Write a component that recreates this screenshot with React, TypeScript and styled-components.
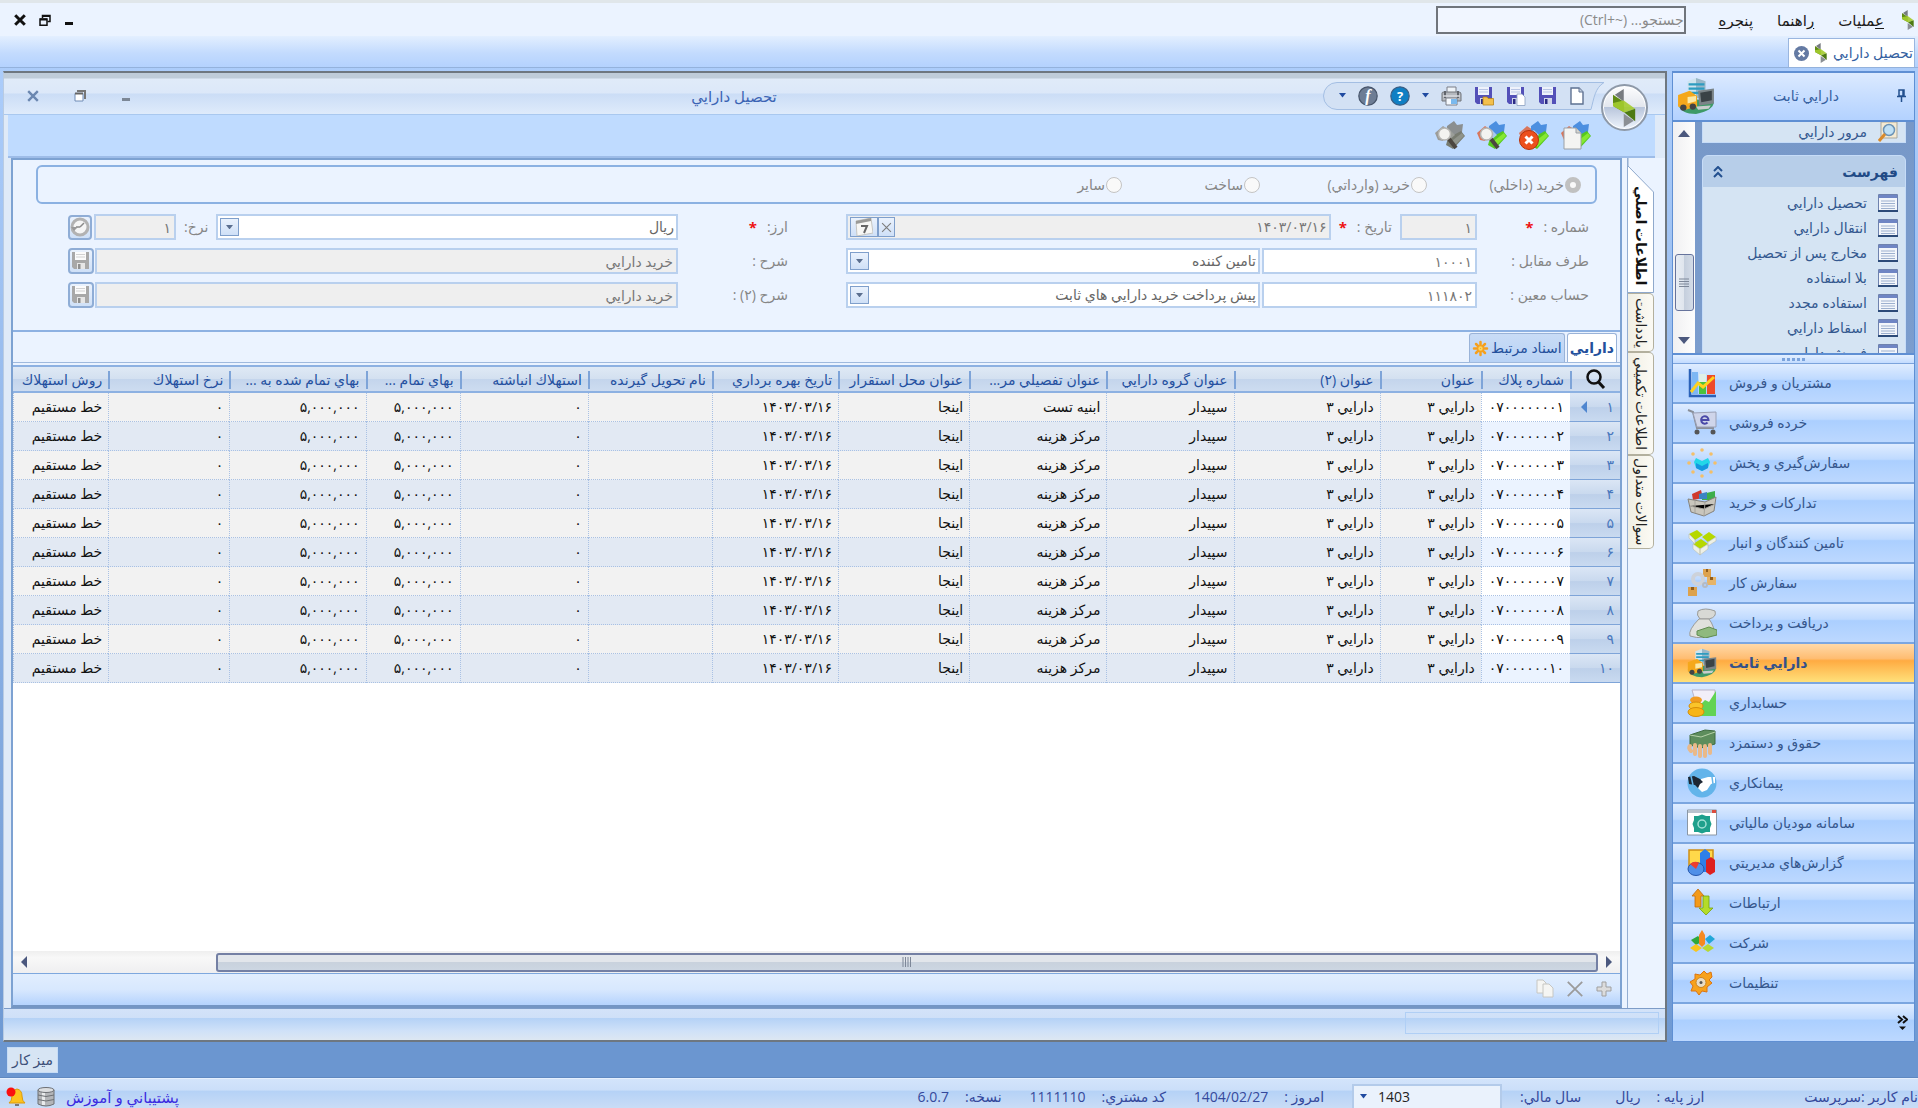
import React from "react";
import styled, { createGlobalStyle, css } from "styled-components";

const Global = createGlobalStyle`
  *, *::before, *::after { box-sizing: border-box; }
  html, body { margin: 0; padding: 0; }
  body {
    font-family: "Open Sans", "DejaVu Sans", sans-serif;
    font-size: 14px;
    line-height: 20px;
    color: #2b4f8c;
    overflow: hidden;
  }
  button, input, select { font: inherit; color: inherit; margin: 0; padding: 0; border: 0; background: none; border-radius: 0; outline: 0; }
  a { color: inherit; text-decoration: none; }
  svg { display: block; flex: none; }
`;

/* ---------- page frame ---------- */

const Page = styled.div`
  display: flex;
  flex-direction: column;
  height: 100vh;
  border-top: 3px solid #e0e6ea;
  background: linear-gradient(#b0d0fd, #6b96d0);
`;

const MenuBar = styled.header`
  display: flex;
  align-items: center;
  height: 33px;
  flex: none;
  padding: 0 4px 0 14px;
  background: #ebf3ff;
  color: #1c1c1c;
`;

const WindowButtons = styled.div<{ $gap: number }>`
  display: flex;
  align-items: center;
  gap: ${(p) => p.$gap}px;
`;

const IconButton = styled.button`
  display: flex;
  align-items: center;
  justify-content: center;
  flex: none;
`;

const SearchBox = styled.input`
  width: 250px;
  height: 28px;
  margin-left: auto;
  padding: 0;
  border: 2px solid #70757c;
  background: #f1f6ff;
  font-size: 14px;
  direction: rtl;
  &::placeholder { color: #8a8a8a; opacity: 1; }
`;

const Menus = styled.nav`
  display: flex;
  align-items: center;
  gap: 24px;
  margin-left: 33px;
`;

const MenuItem = styled.button`
  direction: rtl;
  font-size: 15px;
`;

const Mnemonic = styled.u`
  text-underline-offset: 2px;
`;

const MenuLogo = styled.span`
  margin-left: 18px;
`;

const TabStrip = styled.div`
  display: flex;
  justify-content: flex-end;
  align-items: flex-end;
  height: 32px;
  flex: none;
  padding-right: 3px;
  background: linear-gradient(#e3efff, #c3dbfe 55%, #b4d2fe);
  border-bottom: 1px solid #94b2dc;
`;

const DocTab = styled.div`
  display: flex;
  align-items: center;
  gap: 6px;
  height: 29px;
  padding: 0 1px 0 5px;
  direction: ltr;
  background: #fff;
  border: 1px solid #9ab6df;
  border-bottom: 0;
  color: #33609f;
`;

const Workspace = styled.main`
  display: flex;
  flex: 1;
  min-height: 0;
  gap: 5px;
  padding: 3px 3px 0 3px;
`;

/* ---------- document window ---------- */

const DocWindow = styled.section`
  position: relative;
  display: flex;
  flex-direction: column;
  flex: 1;
  min-width: 0;
  border: 2px solid #6e7780;
  border-left: 1px solid #b9cbe2;
  background: #dfeaf8;
`;

const TitleBar = styled.div`
  display: flex;
  align-items: center;
  height: 42px;
  flex: none;
  padding: 4px 61px 0 23px;
  background: linear-gradient(#bfccd9 5px, #e0ebf9 6px, #dce8f9 20px, #cbddf6 21px, #dfebfb);
  border-bottom: 1px solid #a9c8ef;
`;

const Title = styled.h1`
  flex: 1;
  margin: 0;
  padding-left: 14px;
  text-align: center;
  direction: rtl;
  font-size: 15px;
  font-weight: 400;
  color: #3c64b4;
`;

const QuickAccess = styled.div`
  position: relative;
  display: flex;
  align-items: center;
  width: 281px;
  height: 28px;
  padding: 0 20px 0 16px;
  justify-content: space-between;
`;

const PillShape = styled.svg`
  position: absolute;
  inset: 0;
`;

const QuickButton = styled(IconButton)`
  position: relative;
`;

const Orb = styled.button`
  position: absolute;
  z-index: 2;
  top: 11px;
  right: 17px;
  display: flex;
  align-items: center;
  justify-content: center;
  width: 47px;
  height: 47px;
  border-radius: 50%;
  border: 2px solid #8e99a8;
  background: linear-gradient(#fdfdfe, #e3e7ee 48%, #b9c6dc 50%, #eef4fc);
  box-shadow: inset 0 0 0 1px #fff;
`;

const Ribbon = styled.div`
  display: flex;
  justify-content: flex-end;
  align-items: center;
  gap: 12px;
  height: 43px;
  flex: none;
  margin: 0 10px 0 4px;
  padding: 0 64px 0 0;
  background: #bfdbff;
  border-bottom: 2px solid #9dbce8;
`;

const Body = styled.div`
  display: flex;
  flex: 1;
  min-height: 0;
  margin-left: 7px;
  background: #ebf3ff;
`;

const Content = styled.div`
  display: flex;
  flex-direction: column;
  flex: 1;
  min-width: 0;
  border: 2px solid #7da2d2;
  border-bottom: 3px solid #7496c4;
  margin-right: 5px;
`;

const FormPanel = styled.form`
  flex: none;
  height: 172px;
  padding: 5px 23px 0 23px;
  border-bottom: 2px solid #8db1e2;
  direction: rtl;
  color: #868686;
`;

const RadioGroup = styled.fieldset`
  display: flex;
  align-items: center;
  height: 39px;
  margin: 0;
  padding: 0 14px;
  border: 2px solid #8bb1e2;
  border-radius: 6px;
`;

const RadioLabel = styled.label<{ $width: number }>`
  display: flex;
  align-items: center;
  gap: 1px;
  width: ${(p) => p.$width}px;
`;

const Radio = styled.input`
  appearance: none;
  width: 16px;
  height: 16px;
  border: 1px solid #c4c4c4;
  border-radius: 50%;
  background: #f9f9f9;
  &:checked { border: 5px solid #c1c1c1; }
`;

const FormGrid = styled.div`
  display: grid;
  grid-template-columns: 112px minmax(0, 630fr) 168px minmax(0, 609fr);
  row-gap: 8px;
  padding: 10px 8px 0 32px;
  align-items: center;
`;

const Label = styled.label`
  display: flex;
  gap: 10px;
  white-space: nowrap;
`;

const LeadLabel = styled(Label)`
  padding-right: 58px;
`;

const Star = styled.span`
  color: #ee1111;
  font-weight: 700;
  font-size: 15px;
`;

const FieldRow = styled.div<{ $gap: number }>`
  display: flex;
  align-items: center;
  gap: ${(p) => p.$gap}px;
  min-width: 0;
`;

const fieldBox = css`
  height: 26px;
  border: 2px solid #b9d0ee;
  background: #fff;
`;

const TextField = styled.input<{ $width?: number; $grey?: boolean }>`
  ${fieldBox}
  min-width: 0;
  ${(p) => (p.$width ? `width: ${p.$width}px; flex: none;` : "flex: 1;")}
  padding: 0 3px;
  direction: rtl;
  color: #777;
  ${(p) => p.$grey && "background: #efefef;"}
`;

const Combo = styled.div<{ $grey?: boolean }>`
  ${fieldBox}
  display: flex;
  align-items: center;
  flex: 1;
  min-width: 0;
  padding-left: 2px;
  ${(p) => p.$grey && "background: #efefef;"}
`;

const ComboSelect = styled.select`
  appearance: none;
  flex: 1;
  min-width: 0;
  padding: 0 2px;
  direction: rtl;
  color: #666;
`;

const ComboInput = styled.input`
  flex: 1;
  min-width: 0;
  padding: 0 2px;
  direction: rtl;
  color: #777;
`;

const SmallButton = styled(IconButton)<{ $width: number; $height: number }>`
  width: ${(p) => p.$width}px;
  height: ${(p) => p.$height}px;
  border: 1px solid #7f9fcb;
  background: linear-gradient(#eaf2fd, #cfe0f7);
`;

const SideButton = styled(SmallButton)`
  border-width: 2px;
  border-color: #8fadd6;
  border-radius: 4px;
`;

/* ---------- grid ---------- */

const GridTabs = styled.div`
  display: flex;
  align-items: flex-end;
  gap: 2px;
  height: 31px;
  flex: none;
  padding-right: 3px;
  direction: rtl;
  border-bottom: 1px solid #9fb9dd;
`;

const GridTab = styled.button<{ $active?: boolean }>`
  display: flex;
  align-items: center;
  gap: 2px;
  height: 29px;
  padding: 0 2px;
  border: 1px solid #9ab3d8;
  border-bottom: 0;
  border-radius: 3px 3px 0 0;
  color: #23509c;
  background: ${(p) => (p.$active ? "#fff" : "linear-gradient(#c9dcf6, #b8d2f5)")};
  font-weight: ${(p) => (p.$active ? 700 : 400)};
`;

const GridArea = styled.div`
  display: flex;
  flex-direction: column;
  flex: 1;
  min-height: 0;
  margin-top: 2px;
  border-top: 2px solid #8db1e2;
  background: #fff;
`;

const Table = styled.table`
  width: 100%;
  table-layout: fixed;
  border-collapse: separate;
  border-spacing: 0;
  direction: rtl;
  color: #111;
`;

const Th = styled.th<{ $center?: boolean }>`
  position: relative;
  height: 26px;
  padding: 2px 6px 0;
  text-align: right;
  font-weight: 400;
  white-space: nowrap;
  overflow: hidden;
  color: #2450a0;
  background: linear-gradient(#dfe9f5, #d3e0f0 50%, #c4d5ec 52%, #cddcf0);
  border-bottom: 2px solid #8db1e2;
  ${(p) => p.$center && "padding: 0 13px;"}
  &:not(:last-child)::after {
    content: "";
    position: absolute;
    left: 0;
    top: 4px;
    bottom: 2px;
    width: 2px;
    background: #7ea4d8;
  }
`;

const Row = styled.tr`
  background: #f2f2f2;
  &:nth-child(even) { background: #e2e9f3; }
`;

const Td = styled.td<{ $first?: boolean }>`
  height: 29px;
  padding: 0 6px;
  text-align: right;
  white-space: nowrap;
  border-left: 1px dotted #a9c1e4;
  border-bottom: 1px dotted #a9c1e4;
  ${(p) => p.$first && css`background: #fff; ${Row}:nth-child(even) & { background: #ebf3ff; }`}
`;

const RowHead = styled.th`
  padding: 0 6px;
  text-align: right;
  font-weight: 400;
  color: #4a78bd;
  background: linear-gradient(#dbe6f5, #c9d9ee 50%, #bdd0ea 52%, #c9daf0);
  border-bottom: 1px solid #7ea4d8;
`;

const RowHeadInner = styled.div`
  display: flex;
  justify-content: space-between;
  align-items: center;
`;

const HScroll = styled.div`
  display: flex;
  align-items: center;
  height: 22px;
  flex: none;
  margin-top: auto;
  padding: 0 7px 0 7px;
  background: linear-gradient(#efefef, #f8f8f8 30%, #efeff0);
`;

const HTrack = styled.div`
  flex: 1;
  display: flex;
  justify-content: flex-end;
  margin: 0 7px 0 0;
`;

const HThumb = styled.div`
  display: flex;
  justify-content: center;
  align-items: center;
  width: 88%;
  height: 19px;
  border: 2px solid #7480a4;
  border-radius: 3px;
  background: linear-gradient(#e2e6eb, #e2e6eb 45%, #c9d2dd 50%, #ccd6e2);
`;

const GridFooter = styled.div`
  display: flex;
  justify-content: flex-end;
  align-items: center;
  gap: 12px;
  height: 32px;
  flex: none;
  padding: 0 8px 2px;
  background: linear-gradient(#e1eefe, #d8e8fe 50%, #b5d3fd);
  border-top: 1px solid #7ea8de;
`;

const SideTabs = styled.div`
  display: flex;
  flex-direction: column;
  width: 38px;
  flex: none;
  border-left: 1px solid #94aed2;
`;

const SideTab = styled.button<{ $height: number }>`
  display: flex;
  align-items: center;
  justify-content: center;
  width: 26px;
  height: ${(p) => p.$height}px;
  overflow: hidden;
  writing-mode: vertical-rl;
  white-space: nowrap;
  color: #222;
  border: 1px solid #b3b09e;
  border-left: 0;
  border-radius: 0 5px 5px 0;
  background: linear-gradient(90deg, #f1efe4, #fbfaf4);
`;

const ActiveSideTab = styled.button`
  position: relative;
  display: flex;
  align-items: center;
  justify-content: flex-end;
  width: 26px;
  height: 135px;
  padding-bottom: 8px;
  writing-mode: vertical-rl;
  white-space: nowrap;
  font-weight: 700;
  color: #111;
`;

const ChamferShape = styled.svg`
  position: absolute;
  inset: 0;
`;

const TabCaption = styled.span`
  position: relative;
`;

const FooterBar = styled.div`
  display: flex;
  justify-content: flex-end;
  align-items: flex-start;
  height: 32px;
  flex: none;
  padding: 3px 6px;
  background: linear-gradient(#d3e3f9, #cfe0f8 28%, #b5d2f6 30%, #cfe1f8 70%, #dde7f2);
  border-top: 1px solid #7d9cc8;
`;

const FooterSlot = styled.div`
  width: 254px;
  height: 22px;
  border: 1px solid #b0cff5;
`;

/* ---------- right sidebar ---------- */

const Sidebar = styled.aside`
  display: flex;
  flex-direction: column;
  width: 243px;
  flex: none;
  border: 1px solid #5f8fd3;
  border-width: 2px 1px 1px 1px;
`;

const SideHeader = styled.div`
  display: flex;
  align-items: center;
  height: 49px;
  flex: none;
  padding: 0 8px 2px 4px;
  background: linear-gradient(#dceaff, #c9dfff 45%, #b3d2ff);
  border-bottom: 2px solid #5f8fd3;
`;

const SideTitle = styled.h2`
  flex: 1;
  margin: 0;
  text-align: center;
  font-size: 14px;
  font-weight: 400;
  direction: rtl;
  color: #35609f;
`;

const SideScroll = styled.div`
  display: flex;
  flex: 1;
  min-height: 0;
  overflow: hidden;
`;

const VScroll = styled.div`
  display: flex;
  flex-direction: column;
  align-items: center;
  justify-content: space-between;
  width: 22px;
  flex: none;
  padding: 8px 0 9px;
  background: linear-gradient(90deg, #f0f0f2, #fdfdfd);
`;

const VTrack = styled.div`
  flex: 1;
  display: flex;
  align-items: flex-end;
  padding-bottom: 26px;
`;

const VThumb = styled.div`
  display: flex;
  align-items: center;
  justify-content: center;
  width: 19px;
  height: 57px;
  border: 1px solid #66739c;
  border-radius: 3px;
  background: linear-gradient(90deg, #e8edf4, #dfe5ed 48%, #c5cfdd 50%, #d4dce8);
`;

const Groups = styled.div`
  display: flex;
  flex-direction: column;
  flex: 1;
  gap: 12px;
  padding: 0 8px 0 7px;
  overflow: hidden;
  background: linear-gradient(#7798c8, #7b9dce);
`;

const PriorGroup = styled.div`
  display: flex;
  flex-direction: column;
  justify-content: flex-end;
  height: 21px;
  flex: none;
  overflow: hidden;
  background: #d5e4f3;
  border: 1px solid #c6dcf8;
  border-top: 0;
`;

const Group = styled.div`
  flex: none;
  background: #d5e4f3;
  border: 1px solid #c6dcf8;
  border-radius: 6px 6px 0 0;
`;

const GroupHeader = styled.div`
  display: flex;
  align-items: center;
  justify-content: space-between;
  height: 31px;
  padding: 0 7px 0 10px;
  margin-bottom: 3px;
  border-radius: 5px 5px 0 0;
  background: #b7cee9;
  color: #214a86;
  font-weight: 700;
`;

const ListLink = styled.a`
  display: flex;
  align-items: center;
  gap: 11px;
  height: 25px;
  padding: 0 7px;
  direction: rtl;
  color: #33588f;
`;

const Splitter = styled.div`
  display: flex;
  align-items: center;
  justify-content: center;
  gap: 2px;
  height: 11px;
  flex: none;
  background: linear-gradient(#e3efff, #c3dbff);
  border-top: 2px solid #5f8fd3;
  border-bottom: 1px solid #7ba3dc;
`;

const Dot = styled.i`
  width: 3px;
  height: 3px;
  background: #7ba3dc;
`;

const NavItem = styled.button<{ $active?: boolean }>`
  display: flex;
  align-items: center;
  gap: 12px;
  width: 100%;
  height: 40px;
  flex: none;
  padding: 0 14px;
  border-bottom: 2px solid #7ba6e0;
  color: #35568c;
  background: linear-gradient(#dfecff, #bfdaff 40%, #abcfff 44%, #bcd8ff);
  ${(p) => p.$active && css`
    font-weight: 700;
    color: #33508a;
    background: linear-gradient(#ffd9a8, #ffbd72 38%, #ffab42 44%, #ffe07a);
  `}
`;

const NavOverflow = styled.button`
  display: flex;
  justify-content: flex-end;
  align-items: center;
  height: 37px;
  flex: none;
  padding-right: 6px;
  background: linear-gradient(#dfecff, #bfdaff 40%, #abcfff 44%, #bcd8ff);
`;

/* ---------- bottom ---------- */

const DeskBar = styled.div`
  display: flex;
  align-items: center;
  height: 36px;
  flex: none;
  padding: 0 7px;
  background: #6b96d0;
  border-bottom: 1px solid #5f88c0;
`;

const DeskButton = styled.button`
  width: 51px;
  height: 26px;
  background: #d7e5f4;
  border: 1px solid #c6dcf6;
  color: #3c4f78;
`;

const StatusBar = styled.footer`
  display: flex;
  align-items: center;
  height: 30px;
  flex: none;
  gap: 11px;
  padding: 6px 0 0 6px;
  overflow: hidden;
  white-space: nowrap;
  background: linear-gradient(#d3e4fb, #cbdff9 38%, #b5d2f6 42%, #c9dcf6);
  border-top: 1px solid #e6f0fd;
  color: #34489c;
`;

const SupportLink = styled.a`
  color: #3b2be0;
  font-size: 15px;
  direction: rtl;
`;

const StatusItems = styled.dl`
  display: flex;
  flex: 1;
  align-items: center;
  direction: rtl;
  margin: 0;
`;

const StatusPair = styled.div<{ $gap: number; $after: number }>`
  display: flex;
  align-items: center;
  gap: ${(p) => p.$gap}px;
  margin-left: ${(p) => p.$after}px;
  dt, dd { margin: 0; }
`;

const YearBox = styled.div`
  display: flex;
  align-items: center;
  width: 150px;
  height: 26px;
  padding: 0 6px;
  direction: ltr;
  background: #eaf2fc;
  border: 2px solid #b3cbea;
  color: #222;
`;

const YearSelect = styled.select`
  appearance: none;
  flex: 1;
  padding-left: 11px;
`;

/* ---------- drawings ---------- */

const Logo = ({ h }: { h: number }) => (
  <svg width={h * 0.6} height={h} viewBox="0 0 36 60">
    <path d="M17 0V20L3 9Z" fill="#777b80" />
    <path d="M0 9 17 20 18 37 0 27Z" fill="#5f8a14" />
    <path d="M17 18 35 31 18 37 0 27 0 22Z" fill="#a4cc2e" opacity=".9" />
    <path d="M18 37 35 31V51Z" fill="#4d7a12" />
    <path d="M17 60V39L33 50Z" fill="#8b8f94" />
  </svg>
);

const Caret = ({ s = 8, c = "#1f4aa0" }: { s?: number; c?: string }) => (
  <svg width={s} height={s / 2 + 1} viewBox="0 0 8 5"><path d="M0 0H8L4 5Z" fill={c} /></svg>
);

const Cross = ({ s, c, w = 2 }: { s: number; c: string; w?: number }) => (
  <svg width={s} height={s} viewBox="0 0 10 10"><path d="M1 1 9 9M9 1 1 9" stroke={c} strokeWidth={w} /></svg>
);

const Minus = ({ c }: { c: string }) => (
  <svg width="10" height="12" viewBox="0 0 10 12"><path d="M1 9.500H9" stroke={c} strokeWidth="3" /></svg>
);

const Restore = ({ c }: { c: string }) => (
  <svg width="12" height="12" viewBox="0 0 12 12" fill="none" stroke={c}>
    <path d="M3.500 4V1.500H11V7.500H8.500" strokeWidth="1.500" /><path d="M3 2H11" strokeWidth="2" />
    <path d="M1 5H8V11.200H1Z" strokeWidth="1.500" /><path d="M1 5.500H8" strokeWidth="2" />
  </svg>
);

const DiskArt = ({ grey }: { grey?: boolean }) => {
  const a = grey ? "#a8a8a8" : "#5350b8";
  return (
    <>
      <path d="M1 1H18V18H3L1 16Z" fill={a} />
      <path d="M4 1H15V9H4Z" fill={grey ? "#fbfbfb" : "#eef2fb"} />
      <path d="M5 3.500H14M5 6H14" stroke={grey ? "#d2d2d2" : "#b9c6e6"} />
      <path d="M6 12H14V18H6Z" fill={grey ? "#e6e6e6" : "#cfd4ea"} />
      <path d="M7 13H9.500V18H7Z" fill={grey ? "#8f8f8f" : "#2c2c86"} />
    </>
  );
};

const Disk = ({ grey, kind }: { grey?: boolean; kind?: "page" | "folder" }) => (
  <svg width="20" height="20" viewBox="0 0 20 20">
    <DiskArt grey={grey} />
    {kind === "page" && <path d="M11 8H16L19 11V19.500H11Z" fill="#fff" stroke="#8aa0c0" strokeWidth=".8" />}
    {kind === "folder" && <path d="M9 11H13L14 12.500H19.500V19H9Z" fill="#f3c04c" stroke="#b98416" strokeWidth=".8" />}
  </svg>
);

const NewPage = () => (
  <svg width="14" height="18" viewBox="0 0 14 18">
    <path d="M1 1H9L13 5V17H1Z" fill="#fff" stroke="#5e7191" strokeWidth="1.400" /><path d="M9 1V5H13" fill="#c3cfe0" stroke="#5e7191" />
  </svg>
);

const Printer = () => (
  <svg width="21" height="20" viewBox="0 0 21 20">
    <path d="M6 1H15V8H6Z" fill="#eef3f8" stroke="#7a7f88" />
    <path d="M1 7Q1 6 3 6H18Q20 6 20 8V15H1Z" fill="#b4b8be" stroke="#70747b" />
    <path d="M4 5V12M17 5V12" stroke="#60646b" strokeWidth="2" />
    <path d="M2 10H19" stroke="#d8dbe0" strokeWidth="1.500" />
    <path d="M5 12H16V19H5Z" fill="#f4f8fd" stroke="#7a7f88" /><path d="M10 13H16V18H10Z" fill="#7ab9ee" />
  </svg>
);

const RoundGlyph = ({ fill, glyph, italic }: { fill: string; glyph: string; italic?: boolean }) => (
  <svg width="20" height="20" viewBox="0 0 20 20">
    <circle cx="10" cy="10" r="9.200" fill={fill} stroke={italic ? "#47556b" : "#3a5f86"} strokeWidth="1.200" />
    <text x="10" y="14.500" textAnchor="middle" fontSize={italic ? 16 : 13} fontWeight="700" fontFamily={italic ? "Liberation Serif, serif" : "Open Sans, sans-serif"} fontStyle={italic ? "italic" : "normal"} fill="#fff">{glyph}</text>
  </svg>
);

const Ribboned = ({ kind }: { kind: "page" | "stop" | "find" | "findGrey" }) => {
  const g = kind === "findGrey";
  return (
    <svg width="30" height="30" viewBox="0 0 30 30">
      <path d="M0 12 8 5 14 9 8 20 3 19Z" fill={g ? "#9c9c98" : "#d8765c"} />
      <path d="M12 5 19 0 22 4 28 3 27 11 20 16 12 12Z" fill={g ? "#8b8f90" : "#4c8fe0"} />
      <path d="M13 17 26 10 30 15 18 28 11 24Z" fill={g ? "#777b70" : "#57c81e"} />
      <path d="M8 12 15 9 20 14 13 20Z" fill={g ? "#9a9d98" : "#a8c8ee"} />
      <path d="M18 19 27 12 29 15 18 26Z" fill={g ? "#8f938a" : "#86e832"} />
      {kind === "page" && <path d="M3 7H15L20 12V28H3Z" fill="#f4f4f2" stroke="#9ba0a5" />}
      {kind === "page" && <path d="M15 7V12H20" fill="#d5d5d0" stroke="#9ba0a5" />}
      {kind === "stop" && <><circle cx="10" cy="19" r="9.500" fill="#ec4f1c" stroke="#b93208" /><path d="M6.500 15.500 13.500 22.500M13.500 15.500 6.500 22.500" stroke="#fff" strokeWidth="3" /></>}
      {(kind === "find" || g) && <><path d="M14 18 21 27" stroke="#4b4640" strokeWidth="4" /><circle cx="9.500" cy="13" r="6" fill="#f3f3f0" stroke="#b5b5b2" strokeWidth="1.500" /></>}
    </svg>
  );
};

const AssetArt = ({ s }: { s: number }) => (
  <svg width={s} height={s} viewBox="0 0 36 36">
    <path d="M1 26Q14 18 35 24Q34 32 18 35Q4 35 1 26Z" fill="#3e9a68" />
    <path d="M10 4 18 1 27 4V20H10Z" fill="#cfe4ee" /><path d="M18 1 27 4V20H18Z" fill="#98b7c8" />
    <path d="M11 7H26M11 11H26M11 15H26" stroke="#2d9cc0" strokeWidth="2" />
    <path d="M20 13 35 11V25L21 27Z" fill="#7b8488" /><path d="M22 15 33 13V22L23 24Z" fill="#3a4246" /><path d="M18 28 32 27 30 30 20 31Z" fill="#c8cccd" />
    <path d="M1 17 12 13 19 18V28L8 31 1 28Z" fill="#f5a81c" /><path d="M10 19 18 18V23L10 25Z" fill="#fbe9a8" />
    <circle cx="6" cy="29" r="3" fill="#444" /><circle cx="15" cy="28" r="3" fill="#444" />
  </svg>
);

const ListArt = () => (
  <svg width="20" height="18" viewBox="0 0 20 18">
    <path d="M.5 .5H19.500V17H.5Z" fill="#f3f6fb" stroke="#6f82ae" /><path d="M1 1H19V4H1Z" fill="#6f85c4" />
    <path d="M3 7H17M3 9.500H17M3 12H17M3 14.500H17" stroke="#9db0cf" /><path d="M0 17H20" stroke="#2c4a78" strokeWidth="2" />
  </svg>
);

const ReviewArt = () => (
  <svg width="20" height="20" viewBox="0 0 20 20">
    <path d="M3 0H19V16H3Z" fill="#f5ead2" stroke="#a9a79c" /><circle cx="11" cy="8" r="5.500" fill="#bfe0f5" stroke="#6c93b5" strokeWidth="1.500" />
    <path d="M7 12 1 19" stroke="#d98a2b" strokeWidth="3" />
  </svg>
);

const navArt: Record<string, React.ReactNode> = {
  chart: <><path d="M3 1V28H29" stroke="#2b62b8" strokeWidth="2.500" fill="none" /><path d="M5 4H11V26H5Z" fill="#7db7f4" /><path d="M12 14H19V26H12Z" fill="#4cc23d" /><path d="M12 6H19V14H12Z" fill="#dff0e8" /><path d="M20 7H28V26H20Z" fill="#ee4a2a" /><path d="M4 24 11 15 16 19 27 9" stroke="#ffd21e" strokeWidth="3" fill="none" /></>,
  cart: <><path d="M1 2 6 4 10 20H27" fill="none" stroke="#8a8f99" strokeWidth="2" /><path d="M6 5 29 4V19H10Z" fill="#cfd5ea" stroke="#9aa0b5" /><path d="M15 12H21.500A3.700 3.700 0 1 0 20.500 14.500" fill="none" stroke="#4a49a8" strokeWidth="2" /><circle cx="10" cy="24" r="2.500" fill="#555" /><circle cx="26" cy="24" r="2.500" fill="#555" /></>,
  burst: <><path d="M9 10 15 13 21 10 23 14 21 20 15 23 9 20 7 14Z" fill="#22d7e8" /><path d="M9 15 15 18 21 15 21 20 15 23 9 20Z" fill="#1597e0" />{[[15, 2], [15, 28], [2, 15], [28, 15], [6, 6], [24, 6], [6, 24], [24, 24]].map(([x, y]) => <circle key={`${x}-${y}`} cx={x} cy={y} r="1.800" fill="#f3bf6a" />)}</>,
  basket: <><path d="M5 6 14 2 16 10 6 12Z" fill="#cf3a2e" /><path d="M15 6 28 3V12H15Z" fill="#3eae4a" /><path d="M12 6 20 4 20 11H12Z" fill="#3b84c4" /><path d="M1 11 18 14 29 9 27 23 17 28 4 24Z" fill="#c9c6bd" stroke="#85827b" /><path d="M18 14 17 28M8 13V25M3 18 17 21 28 16" stroke="#a5a29b" /></>,
  cubes: <><path d="M2 6 10 2 16 7 8 12Z" fill="#b6d800" /><path d="M15 9 22 4 29 9 21 14Z" fill="#b6d800" /><path d="M6 16 14 11 21 16 13 21Z" fill="#b6d800" /><path d="M2 6 8 12V16L2 10ZM29 9 21 14V18L29 13ZM6 16 13 21V27L6 21ZM21 16 13 21V27L21 21Z" fill="#eef0e6" stroke="#b9bdb0" strokeWidth=".6" /></>,
  order: <><path d="M1 19H10V28H1Z" fill="#dda24d" /><path d="M16 1H24V9H16Z" fill="#dda24d" /><path d="M20 9H29V17H20Z" fill="#e6b468" /><path d="M4 19H7V22H4ZM19 1H21V4H19ZM23 9H26V12H23Z" fill="#8f5c1c" /><circle cx="11" cy="11" r="5" fill="none" stroke="#cdd2da" strokeWidth="4" /><circle cx="18" cy="17" r="2" fill="none" stroke="#b5bac2" strokeWidth="2" /></>,
  bag: <><path d="M11 3Q18 -1 28 3Q30 9 22 11L13 11Q9 7 11 3Z" fill="#d8d9d5" stroke="#9a9b98" /><path d="M12 11H22Q28 19 27 27Q16 32 3 28Q1 22 12 11Z" fill="#e0e1dd" stroke="#9a9b98" /><path d="M10 23 22 19 30 22V27L18 30 10 27Z" fill="#8fb97e" stroke="#5f8c50" /></>,
  ledger: <><path d="M5 2H28V26H12Z" fill="#f2eef8" stroke="#b9b4c9" /><path d="M12 28V18L18 12 22 14 29 3V28Z" fill="#62d354" /><ellipse cx="9" cy="12" rx="6" ry="3.500" fill="#f29b22" /><ellipse cx="9" cy="18" rx="7" ry="4" fill="#fac42a" stroke="#d68e0a" /><ellipse cx="9" cy="24" rx="8" ry="4.500" fill="#f7b516" stroke="#d68e0a" /></>,
  money: <><path d="M3 7 18 2 28 3V16L14 20 3 17Z" fill="#5d8d5c" stroke="#3f6b40" /><path d="M3 7 14 9 28 4" stroke="#b7d2a9" fill="none" /><path d="M3 18Q1 20 4 23M8 17V26M13 18V28M18 18V28M23 17V25" stroke="#e9b98a" strokeWidth="4" strokeLinecap="round" fill="none" /></>,
  shake: <><circle cx="15" cy="15" r="14.500" fill="#63b4ea" /><path d="M14 11 21 9 28 9 28 15 24 16 20 22 15 24 11 20Z" fill="#fff" /><path d="M1 9 7 8 13 11 16 14 13 16 11 20 8 17 2 16Z" fill="#1d2733" /><path d="M4 8 6 17M25 9 26 16" stroke="#63b4ea" strokeWidth="1.500" /></>,
  tax: <><path d="M.5 2H29.500V27H.5Z" fill="#fff" stroke="#8a97a5" /><path d="M1 2H29V5H1Z" fill="#b9c3ce" /><path d="M25 2H29V5H25Z" fill="#dc4b3e" /><path d="M7 8H11L15 6.500 19 8H23V12L24.500 16 23 20V24H19L15 25.500 11 24H7V20L5.500 16 7 12Z" fill="#1ea08c" /><circle cx="15" cy="16" r="4" fill="none" stroke="#9fe0d5" strokeWidth="1.500" /></>,
  report: <><path d="M2 2H26V22H2Z" fill="#ffd84a" stroke="#cf8f14" strokeWidth="1.500" /><path d="M13 5 18 1 23 5V24H13Z" fill="#2f7fe8" /><path d="M19 12 24 9 28 12V24L23 27 19 24Z" fill="#dd2020" /><ellipse cx="9" cy="21" rx="8" ry="6.500" fill="#4f8fe8" stroke="#2355ad" /><path d="M9 21 3 16Q8 12 12 15Z" fill="#ee3f2e" /></>,
  arrows: <><path d="M11 1 17 8H14V19H8V8H5Z" fill="#f39a1a" stroke="#c26a0a" strokeWidth=".8" /><path d="M19 27 26 20H22V8H16V20H12Z" fill="#b4dc28" stroke="#77a30e" strokeWidth=".8" /></>,
  company: <><path d="M4 12 11 8 16 13 9 17Z" fill="#2fa83a" /><path d="M18 11 23 7 28 11 22 16Z" fill="#22a7d8" /><path d="M3 20 9 16 15 20 9 24Z" fill="#f8c51c" /><path d="M15 20 21 16 27 20 21 24Z" fill="#b6d832" /><path d="M12 7 15 2 18 7V16L15 19 12 16Z" fill="#f5891f" /></>,
  gear: <><path d="M17 3 20 6 24 4 25 9 22 12 25 15 20 19 20 24 15 23 12 27 9 23 4 23 6 18 3 14 8 11 8 6 13 7Z" fill="#f7a21c" stroke="#dd7410" /><circle cx="14" cy="14.500" r="5" fill="#e8dcc5" stroke="#cb8420" /><circle cx="14" cy="14.500" r="1.500" fill="#555" /></>,
};

const NavIcon = ({ name }: { name: string }) =>
  name === "asset" ? <AssetArt s={30} /> : <svg width="30" height="30" viewBox="0 0 30 30">{navArt[name]}</svg>;

const Chevrons = () => (
  <svg width="10" height="12" viewBox="0 0 10 12" fill="none" stroke="#23508f" strokeWidth="2">
    <path d="M1 5 5 1 9 5M1 11 5 7 9 11" />
  </svg>
);

/* ---------- data ---------- */

const fa = (n: number | string) => String(n).replace(/\d/g, (d) => "۰۱۲۳۴۵۶۷۸۹"[Number(d)]);

const columns: [string, number][] = [
  ["شماره پلاك", 89], ["عنوان", 101], ["عنوان (۲)", 146], ["عنوان گروه دارايي", 127],
  ["عنوان تفصيلي مر...", 137], ["عنوان محل استقرار", 131], ["تاريخ بهره برداري", 126], ["نام تحويل گيرنده", 124],
  ["استهلاك انباشته", 128], ["بهاي تمام ...", 94], ["بهاي تمام شده به ...", 136], ["نرخ استهلاك", 121], ["روش استهلاك", 95],
];

const rows = Array.from({ length: 10 }, (_, i) => [
  fa("07" + String(i + 1).padStart(8, "0")), "دارايي ۳", "دارايي ۳", "سپيدار",
  i === 0 ? "ابنيه تست" : "مركز هزينه", "اينجا", "۱۴۰۳/۰۳/۱۶", "", "۰", "۵,۰۰۰,۰۰۰", "۵,۰۰۰,۰۰۰", "۰", "خط مستقيم",
]);

const listItems = ["تحصيل دارايي", "انتقال دارايي", "مخارج پس از تحصيل", "بلا استفاده", "استفاده مجدد", "اسقاط دارايي", "فروش دارايي"];

const navItems: [string, string][] = [
  ["chart", "مشتريان و فروش"], ["cart", "خرده فروشي"], ["burst", "سفارش‌گيري و پخش"], ["basket", "تداركات و خريد"],
  ["cubes", "تامين كنندگان و انبار"], ["order", "سفارش كار"], ["bag", "دريافت و پرداخت"], ["asset", "دارايي ثابت"],
  ["ledger", "حسابداري"], ["money", "حقوق و دستمزد"], ["shake", "پيمانكاري"], ["tax", "سامانه موديان مالياتي"],
  ["report", "گزارش‌هاي مديريتي"], ["arrows", "ارتباطات"], ["company", "شركت"], ["gear", "تنظيمات"],
];

/* ---------- parts ---------- */

const ComboField = ({ id, value }: { id: string; value: string }) => (
  <Combo>
    <ComboSelect id={id} defaultValue={value}><option>{value}</option></ComboSelect>
    <SmallButton type="button" tabIndex={-1} aria-label="باز كردن" $width={19} $height={18}><Caret s={7} c="#5b6f8f" /></SmallButton>
  </Combo>
);

const SaveField = ({ id }: { id: string }) => (
  <FieldRow $gap={1}>
    <TextField id={id} $grey readOnly defaultValue="خريد دارايي" />
    <SideButton type="button" aria-label="ذخيره شرح" $width={26} $height={26}><Disk grey /></SideButton>
  </FieldRow>
);

function AssetForm() {
  return (
    <FormPanel onSubmit={(e) => e.preventDefault()}>
      <RadioGroup aria-label="نوع تحصيل">
        <RadioLabel $width={154}><Radio type="radio" name="kind" defaultChecked disabled />خريد (داخلي)</RadioLabel>
        <RadioLabel $width={167}><Radio type="radio" name="kind" disabled />خريد (وارداتي)</RadioLabel>
        <RadioLabel $width={138}><Radio type="radio" name="kind" disabled />ساخت</RadioLabel>
        <RadioLabel $width={60}><Radio type="radio" name="kind" disabled />ساير</RadioLabel>
      </RadioGroup>
      <FormGrid>
        <Label htmlFor="num">شماره : <Star>*</Star></Label>
        <FieldRow $gap={8}>
          <TextField id="num" $width={77} $grey readOnly defaultValue="۱" />
          <Label htmlFor="date">تاريخ : <Star>*</Star></Label>
          <Combo $grey>
            <ComboInput id="date" readOnly defaultValue="۱۴۰۳/۰۳/۱۶" />
            <SmallButton type="button" aria-label="پاك كردن" $width={17} $height={20}><Cross s={11} c="#7d7d7d" w={1} /></SmallButton>
            <SmallButton type="button" aria-label="تقويم" $width={28} $height={20}>
              <svg width="18" height="18" viewBox="0 0 18 18"><path d="M1 3 16 0 18 15 2 18Z" fill="#f7f7f5" stroke="#c6c6c2" /><path d="M1 3 16 0V3L1 6Z" fill="#9a9a98" /><path d="M6 8H12L9 15" stroke="#666" strokeWidth="2" fill="none" /></svg>
            </SmallButton>
          </Combo>
        </FieldRow>
        <LeadLabel htmlFor="cur">ارز: <Star>*</Star></LeadLabel>
        <FieldRow $gap={8}>
          <ComboField id="cur" value="ريال" />
          <Label htmlFor="rate">نرخ:</Label>
          <FieldRow $gap={2}>
            <TextField id="rate" $width={82} $grey readOnly defaultValue="۱" />
            <SideButton type="button" aria-label="نرخ روز" $width={24} $height={25}>
              <svg width="20" height="20" viewBox="0 0 20 20"><circle cx="10" cy="10" r="8" fill="#f5f5f5" stroke="#b2b2b2" strokeWidth="3" /><path d="M10 10 14 6M10 10H6" stroke="#8a8a8a" strokeWidth="1.500" /><path d="M1 10H8L4 14Z" fill="#9a9a9a" /></svg>
            </SideButton>
          </FieldRow>
        </FieldRow>

        <Label htmlFor="party">طرف مقابل :</Label>
        <FieldRow $gap={2}>
          <TextField id="party" $width={215} defaultValue="۱۰۰۰۱" />
          <ComboField id="partyName" value="تامين كننده" />
        </FieldRow>
        <LeadLabel htmlFor="d1">شرح :</LeadLabel>
        <SaveField id="d1" />

        <Label htmlFor="acc">حساب معين :</Label>
        <FieldRow $gap={2}>
          <TextField id="acc" $width={215} defaultValue="۱۱۱۸۰۲" />
          <ComboField id="accName" value="پيش پرداخت خريد دارايي هاي ثابت" />
        </FieldRow>
        <LeadLabel htmlFor="d2">شرح (۲) :</LeadLabel>
        <SaveField id="d2" />
      </FormGrid>
    </FormPanel>
  );
}

function AssetGrid() {
  return (
    <>
      <GridTabs>
        <GridTab $active>دارايي</GridTab>
        <GridTab>
          اسناد مرتبط
          <svg width="17" height="17" viewBox="0 0 17 17" stroke="#f5a01e" strokeWidth="2.500" strokeLinecap="round">
            <path d="M8.500 2V15M2 8.500H15M4 4 13 13M13 4 4 13" /><circle cx="8.500" cy="8.500" r="1" stroke="#ffd65c" />
          </svg>
        </GridTab>
      </GridTabs>
      <GridArea>
        <Table>
          <colgroup>
            <col style={{ width: `${(50 / 1605) * 100}%` }} />
            {columns.map(([name, w]) => <col key={name} style={{ width: `${(w / 1605) * 100}%` }} />)}
          </colgroup>
          <thead>
            <tr>
              <Th $center aria-label="جستجو">
                <svg width="24" height="20" viewBox="0 0 24 20" fill="none" stroke="#111"><circle cx="11" cy="8" r="6.500" strokeWidth="2.500" /><path d="M15.500 13 21 19" strokeWidth="3" /></svg>
              </Th>
              {columns.map(([name]) => <Th key={name} scope="col">{name}</Th>)}
            </tr>
          </thead>
          <tbody>
            {rows.map((r, i) => (
              <Row key={r[0]}>
                <RowHead scope="row">
                  <RowHeadInner>
                    {fa(i + 1)}
                    {i === 0 && <svg width="15" height="12" viewBox="0 0 15 12"><path d="M11 0V12L5 6Z" fill="#4f86cf" /></svg>}
                  </RowHeadInner>
                </RowHead>
                {r.map((c, j) => <Td key={j} $first={j === 0}>{c}</Td>)}
              </Row>
            ))}
          </tbody>
        </Table>
        <HScroll>
          <svg width="8" height="12" viewBox="0 0 8 12"><path d="M7 0V12L1 6Z" fill="#4b587e" /></svg>
          <HTrack>
            <HThumb><svg width="10" height="10" viewBox="0 0 10 10"><path d="M1 0V10M3.500 0V10M6 0V10M8.500 0V10" stroke="#7d8798" /></svg></HThumb>
          </HTrack>
          <svg width="8" height="12" viewBox="0 0 8 12"><path d="M1 0V12L7 6Z" fill="#4b587e" /></svg>
        </HScroll>
      </GridArea>
      <GridFooter>
        <IconButton aria-label="كپي"><svg width="18" height="19" viewBox="0 0 18 19" fill="#f5f5f3" stroke="#c6c6c2"><path d="M1 1H7L10 4V14H1Z" /><path d="M7 5H13L17 9V18H7Z" /></svg></IconButton>
        <IconButton aria-label="حذف"><Cross s={18} c="#9b9b9b" w={1} /></IconButton>
        <IconButton aria-label="افزودن"><svg width="16" height="16" viewBox="0 0 16 16"><path d="M6 1H10V6H15V10H10V15H6V10H1V6H6Z" fill="#dcdcdc" stroke="#9f9f9f" /></svg></IconButton>
      </GridFooter>
    </>
  );
}

function AssetWindow() {
  return (
    <DocWindow>
      <TitleBar>
        <WindowButtons $gap={35}>
          <IconButton aria-label="بستن"><Cross s={12} c="#6b87b0" w={2} /></IconButton>
          <IconButton aria-label="بازگرداندن"><svg width="12" height="12" viewBox="0 0 12 12"><path d="M3 1H11V9" fill="none" stroke="#777" strokeWidth="2" /><path d="M1 3.500H9V11H1Z" fill="#fff" stroke="#6f8bb5" /><path d="M1 3.500H9" stroke="#666" strokeWidth="2" /></svg></IconButton>
          <IconButton aria-label="كوچك كردن"><Minus c="#7c8796" /></IconButton>
        </WindowButtons>
        <Title>تحصيل دارايي</Title>
        <QuickAccess>
          <PillShape width="281" height="28" viewBox="0 0 281 28"><path d="M14 .5H281C272 6 271 16 268 27.500H14A13.500 13.500 0 0 1 14 .5Z" fill="#d3e1f4" stroke="#a3bee3" /></PillShape>
          <QuickButton aria-label="بيشتر"><Caret s={7} /></QuickButton>
          <QuickButton aria-label="فرمول"><RoundGlyph fill="#6d7d95" glyph="f" italic /></QuickButton>
          <QuickButton aria-label="راهنما"><RoundGlyph fill="#0f7fc4" glyph="?" /></QuickButton>
          <QuickButton aria-label="گزينه‌هاي چاپ"><Caret s={7} /></QuickButton>
          <QuickButton aria-label="چاپ"><Printer /></QuickButton>
          <QuickButton aria-label="ذخيره در پوشه"><Disk kind="folder" /></QuickButton>
          <QuickButton aria-label="ذخيره و جديد"><Disk kind="page" /></QuickButton>
          <QuickButton aria-label="ذخيره"><Disk /></QuickButton>
          <QuickButton aria-label="جديد"><NewPage /></QuickButton>
        </QuickAccess>
      </TitleBar>
      <Orb aria-label="منوي برنامه"><Logo h={38} /></Orb>
      <Ribbon>
        <IconButton aria-label="مشاهده"><Ribboned kind="findGrey" /></IconButton>
        <IconButton aria-label="جستجو"><Ribboned kind="find" /></IconButton>
        <IconButton aria-label="حذف"><Ribboned kind="stop" /></IconButton>
        <IconButton aria-label="صدور"><Ribboned kind="page" /></IconButton>
      </Ribbon>
      <Body>
        <Content>
          <AssetForm />
          <AssetGrid />
        </Content>
        <SideTabs>
          <ActiveSideTab>
            <ChamferShape width="26" height="135" viewBox="0 0 26 135"><path d="M0 0V8L25.500 34V134.500H0" fill="#fff" stroke="#8fa9cc" /></ChamferShape>
            <TabCaption>اطلاعات اصلي</TabCaption>
          </ActiveSideTab>
          <SideTab $height={59}>يادداشت</SideTab>
          <SideTab $height={103}>اطلاعات تكميلي</SideTab>
          <SideTab $height={94}>سوالات متداول</SideTab>
        </SideTabs>
      </Body>
      <FooterBar><FooterSlot /></FooterBar>
    </DocWindow>
  );
}

function RightPane() {
  return (
    <Sidebar>
      <SideHeader>
        <AssetArt s={38} />
        <SideTitle>دارايي ثابت</SideTitle>
        <IconButton aria-label="سنجاق"><svg width="9" height="13" viewBox="0 0 9 13" fill="none" stroke="#23508f" strokeWidth="1.500"><path d="M2 1H7V7H2ZM0 7.500H9M4.500 8V13M6 1V7" /></svg></IconButton>
      </SideHeader>
      <SideScroll>
        <VScroll>
          <svg width="12" height="7" viewBox="0 0 12 7"><path d="M6 0 12 7H0Z" fill="#4b587e" /></svg>
          <VTrack>
            <VThumb><svg width="10" height="10" viewBox="0 0 10 10"><path d="M0 1H10M0 3.500H10M0 6H10M0 8.500H10" stroke="#7d8798" /></svg></VThumb>
          </VTrack>
          <svg width="12" height="7" viewBox="0 0 12 7"><path d="M6 7 12 0H0Z" fill="#4b587e" /></svg>
        </VScroll>
        <Groups>
          <PriorGroup><ListLink href="#"><ReviewArt />مرور دارايي</ListLink></PriorGroup>
          <Group>
            <GroupHeader><Chevrons /><span>فهرست</span></GroupHeader>
            {listItems.map((t) => <ListLink key={t} href="#"><ListArt />{t}</ListLink>)}
          </Group>
        </Groups>
      </SideScroll>
      <Splitter>{[1, 2, 3, 4, 5].map((n) => <Dot key={n} />)}</Splitter>
      {navItems.map(([icon, label]) => (
        <NavItem key={icon} $active={icon === "asset"}><NavIcon name={icon} /><span>{label}</span></NavItem>
      ))}
      <NavOverflow aria-label="پيكربندي">
        <svg width="11" height="16" viewBox="0 0 11 16" fill="none" stroke="#111" strokeWidth="2"><path d="M1 1 5 4.500 1 8M6 1 10 4.500 6 8" /><path d="M2 11.500H9L5.500 15Z" fill="#111" stroke="none" /></svg>
      </NavOverflow>
    </Sidebar>
  );
}

export default function App() {
  return (
    <Page>
      <Global />
      <MenuBar>
        <WindowButtons $gap={13}>
          <IconButton aria-label="بستن"><Cross s={12} c="#111" w={2.500} /></IconButton>
          <IconButton aria-label="بازگرداندن"><Restore c="#111" /></IconButton>
          <IconButton aria-label="كوچك كردن"><Minus c="#111" /></IconButton>
        </WindowButtons>
        <SearchBox aria-label="جستجو" placeholder={"جستجو... \u200e(Ctrl+~)\u200e"} />
        <Menus>
          <MenuItem>پنجر<Mnemonic>ه</Mnemonic></MenuItem>
          <MenuItem><Mnemonic>ر</Mnemonic>اهنما</MenuItem>
          <MenuItem><Mnemonic>ع</Mnemonic>مليات</MenuItem>
        </Menus>
        <MenuLogo><Logo h={20} /></MenuLogo>
      </MenuBar>
      <TabStrip>
        <DocTab>
          <IconButton aria-label="بستن زبانه"><svg width="15" height="15" viewBox="0 0 15 15"><circle cx="7.500" cy="7.500" r="7.500" fill="#647aa3" /><path d="M4.500 4.500 10.500 10.500M10.500 4.500 4.500 10.500" stroke="#fff" strokeWidth="2" /></svg></IconButton>
          <Logo h={20} />
          <span>تحصيل دارايي</span>
        </DocTab>
      </TabStrip>
      <Workspace>
        <AssetWindow />
        <RightPane />
      </Workspace>
      <DeskBar><DeskButton>ميز كار</DeskButton></DeskBar>
      <StatusBar>
        <svg width="20" height="20" viewBox="0 0 20 20"><path d="M11 2Q16 3 16 9 16 14 19 16H3Q6 14 6 9 6 3 11 2Z" fill="#fcc21e" stroke="#dd9a0a" /><path d="M9 17H13V19H9Z" fill="#777" /><circle cx="5" cy="5" r="4.500" fill="#fb0f0f" /></svg>
        <svg width="18" height="20" viewBox="0 0 18 20"><path d="M1 3V17Q9 21 17 17V3Z" fill="#b3b5b8" stroke="#6d7074" /><path d="M5 4V18H8V5Z" fill="#e9ebec" /><ellipse cx="9" cy="3" rx="8" ry="2.500" fill="#dcdee0" stroke="#6d7074" /><path d="M1 8Q9 11 17 8M1 12.500Q9 15.500 17 12.500" stroke="#6d7074" fill="none" /></svg>
        <SupportLink href="#">پشتيباني و آموزش</SupportLink>
        <StatusItems>
          <StatusPair $gap={0} $after={100}><dt>نام كاربر :</dt><dd>سرپرست</dd></StatusPair>
          <StatusPair $gap={16} $after={34}><dt>ارز پايه :</dt><dd>ريال</dd></StatusPair>
          <StatusPair $gap={18} $after={28}>
            <dt><label htmlFor="year">سال مالي:</label></dt>
            <dd><YearBox><Caret s={7} /><YearSelect id="year" defaultValue="1403"><option>1403</option></YearSelect></YearBox></dd>
          </StatusPair>
          <StatusPair $gap={16} $after={28}><dt>امروز :</dt><dd>1404/02/27</dd></StatusPair>
          <StatusPair $gap={16} $after={28}><dt>كد مشتري:</dt><dd>1111110</dd></StatusPair>
          <StatusPair $gap={16} $after={0}><dt>نسخه:</dt><dd>6.0.7</dd></StatusPair>
        </StatusItems>
      </StatusBar>
    </Page>
  );
}
